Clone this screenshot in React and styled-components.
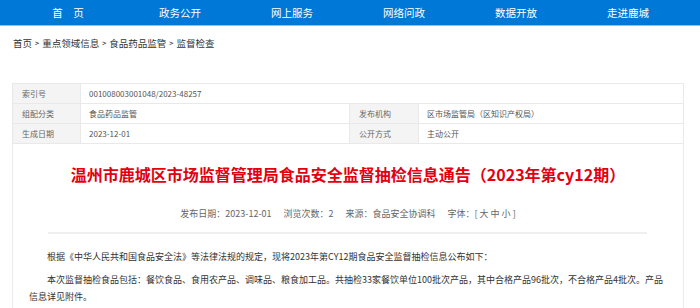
import React from "react";
import styled, { createGlobalStyle } from "styled-components";

const GlobalStyle = createGlobalStyle`
  body {
    margin: 0;
    background: #fff;
    font-family: "Noto Sans CJK SC", "Liberation Sans", sans-serif;
    color: #333;
  }
`;

const navItems = ["首\u3000页", "政务公开", "网上服务", "网络问政", "数据开放", "走进鹿城"];
const crumbs = ["首页", "重点领域信息", "食品药品监管", "监督检查"];

const Nav = () => (
  <NavBar>
    <NavInner>
      {navItems.map((item) => (
        <NavItem key={item}>{item}</NavItem>
      ))}
    </NavInner>
  </NavBar>
);

const App = () => {
  return (
    <>
      <GlobalStyle />
      <Nav />
      <Page>
        <Breadcrumb>
          {crumbs.map((c, i) => (
            <React.Fragment key={c}>
              {i > 0 && <Sep>&gt;</Sep>}
              <span>{c}</span>
            </React.Fragment>
          ))}
        </Breadcrumb>

        <InfoGrid>
          <Label>索引号</Label>
          <Value $span={3}>001008003001048/2023-48257</Value>
          <Label>组配分类</Label>
          <Value>食品药品监管</Value>
          <Label>发布机构</Label>
          <Value>区市场监管局（区知识产权局）</Value>
          <Label>生成日期</Label>
          <Value>2023-12-01</Value>
          <Label>公开方式</Label>
          <Value>主动公开</Value>
        </InfoGrid>

        <Article>
          <Title>温州市鹿城区市场监督管理局食品安全监督抽检信息通告（2023年第cy12期）</Title>
          <Meta>
            <span>发布日期：2023-12-01</span>
            <span>浏览次数：2</span>
            <span>来源：食品安全协调科</span>
            <span>字体：[ 大 中 小 ]</span>
          </Meta>
          <Divider />
          <Body>
            <p>
              根据《中华人民共和国食品安全法》等法律法规的规定，现将2023年第CY12期食品安全监督抽检信息公布如下：
            </p>
            <p>
              本次监督抽检食品包括：餐饮食品、食用农产品、调味品、粮食加工品。共抽检33家餐饮单位100批次产品，其中合格产品96批次，不合格产品4批次。产品信息详见附件。
            </p>
          </Body>
        </Article>
      </Page>
    </>
  );
};

const NavBar = styled.nav`
  background: #0078d7;
  border-bottom: 1px solid #8fc2ee;
`;

const NavInner = styled.ul`
  display: grid;
  grid-template-columns: repeat(6, 112px);
  margin: 0 12px;
  padding: 0;
  list-style: none;
`;

const NavItem = styled.li`
  height: 25px;
  line-height: 25px;
  text-align: center;
  color: #fff;
  font-size: 10.5px;
`;

const Page = styled.div`
  width: 672px;
  margin: 0 12px;
`;

const Breadcrumb = styled.div`
  margin-top: 8px;
  padding-left: 1px;
  height: 18px;
  line-height: 18px;
  font-size: 9.5px;
  color: #333;
`;

const Sep = styled.span`
  margin: 0 3px;
  font-size: 7px;
  font-weight: bold;
  vertical-align: 1px;
`;

const InfoGrid = styled.div`
  margin-top: 31px;
  display: grid;
  grid-template-columns: 67px 268px 68px 1fr;
  gap: 1px;
  padding: 1px;
  background: #e9e9e9;
  font-size: 8px;
`;

const Label = styled.div`
  height: 19px;
  line-height: 19px;
  padding: 0 9px;
  background: #f4f4f4;
  color: #666;
`;

const Value = styled.div`
  height: 19px;
  line-height: 19px;
  padding: 0 8px;
  background: #fff;
  color: #555;
  grid-column: span ${(p) => p.$span || 1};
`;

const Article = styled.div`
  border-left: 1px solid #ececec;
  border-right: 1px solid #ececec;
  padding-top: 19px;
  min-height: 200px;
`;

const Title = styled.h1`
  margin: 0;
  text-align: center;
  font-size: 16px;
  line-height: 22px;
  font-weight: bold;
  color: #e2000f;
`;

const Meta = styled.div`
  margin-top: 22px;
  text-align: center;
  font-size: 9px;
  line-height: 14px;
  color: #666;
  span {
    margin: 0 6px;
  }
`;

const Divider = styled.hr`
  margin: 11px 36px 0 35px;
  border: 0;
  height: 2px;
  background: #efefef;
`;

const Body = styled.div`
  padding: 0 16px;
  margin-top: 14px;
  font-size: 9px;
  line-height: 17px;
  color: #333;
  p {
    margin: 0 0 6px;
    text-indent: 2em;
  }
`;

export default App;
